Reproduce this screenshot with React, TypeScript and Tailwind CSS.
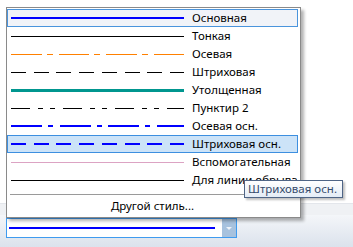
import React from 'react';

interface LineStyle {
  name: string;
  color: string;
  width: number;
  dash?: string;
}

const lineStyles: LineStyle[] = [
  { name: 'Основная', color: '#0000ff', width: 2 },
  { name: 'Тонкая', color: '#000000', width: 1 },
  { name: 'Осевая', color: '#ff8000', width: 1, dash: '30.5 5 6 6.2' },
  { name: 'Штриховая', color: '#000000', width: 1, dash: '15 7.7' },
  { name: 'Утолщенная', color: '#00968f', width: 3 },
  { name: 'Пунктир 2', color: '#000000', width: 1, dash: '19 7.5 5 7 5 8.5' },
  { name: 'Осевая осн.', color: '#0000ff', width: 2, dash: '31 6 5 6.5' },
  { name: 'Штриховая осн.', color: '#0000ff', width: 2, dash: '15 7.7' },
  { name: 'Вспомогательная', color: '#dca3c3', width: 1 },
  { name: 'Для линии обрыва', color: '#000000', width: 1 },
];

// current = style shown in the combo, hovered = row under the mouse
const CURRENT = 0;
const HOVERED = 7;

const LineSample: React.FC<{ style: LineStyle }> = ({ style }) => {
  const y = style.width % 2 ? 8.5 : 8;
  return (
    <svg width="173" height="16" className="shrink-0">
      <line
        x1="0"
        y1={y}
        x2="173"
        y2={y}
        stroke={style.color}
        strokeWidth={style.width}
        strokeDasharray={style.dash}
        shapeRendering="crispEdges"
      />
    </svg>
  );
};

const App: React.FC = () => {
  const rowClass = (i: number) => {
    if (i === HOVERED) return 'border-[#3d8fe0] bg-[#cce3f8]';
    if (i === CURRENT) return 'border-[#4a94dc] bg-[#f1f3f8]';
    return 'border-transparent';
  };

  return (
    <div className="relative w-[353px] h-[247px] overflow-hidden bg-white font-['Noto_Sans',sans-serif] text-[11.5px] text-black">
      {/* background of the window behind the popup */}
      <div className="h-[203px]" />
      <div className="h-[12px] border-t border-[#e3e6eb] bg-[#eff1f4]" />
      <div className="h-[32px] bg-gradient-to-b from-[#f4f6f9] to-[#dbe2ec] pt-[3px] pl-[6px]">
        <div className="flex h-[20px] w-[231px] border border-[#3f9bef] bg-white">
          <div className="flex flex-1 items-center pl-[2px]">
            <div className="h-[2px] w-[206px] bg-[#0000ff]" />
          </div>
          <div className="flex w-[14px] items-center justify-center bg-[#a7c2de]">
            <div className="h-0 w-0 border-x-[3px] border-t-[3px] border-x-transparent border-t-[#eef3f9]" />
          </div>
        </div>
      </div>

      {/* dropdown list */}
      <div className="absolute left-[6px] top-[7px] flex h-[211px] w-[295px] flex-col border border-[#8a8a8a] bg-white pt-[1px] pr-[2px] shadow-[3px_3px_3px_rgba(0,0,0,0.3)]">
        {lineStyles.map((s, i) => (
          <div key={s.name} className={`flex h-[18px] items-center border pl-[3px] ${rowClass(i)}`}>
            <LineSample style={s} />
            <span className="ml-[8px] leading-none whitespace-nowrap">{s.name}</span>
          </div>
        ))}
        <div className="mt-[5px] ml-[3px] h-px bg-[#9a9a9a]" />
        <div className="flex h-[22px] items-center justify-center">Другой стиль...</div>
      </div>

      {/* tooltip */}
      <div className="absolute left-[244px] top-[180px] flex h-[18px] w-[99px] items-center border border-[#4f6586] bg-gradient-to-b from-white to-[#e4ecf6] pl-[3px] text-[#354b6c] whitespace-nowrap shadow-[2px_2px_2px_rgba(0,0,0,0.25)]">
        Штриховая осн.
      </div>
    </div>
  );
};

export default App;
